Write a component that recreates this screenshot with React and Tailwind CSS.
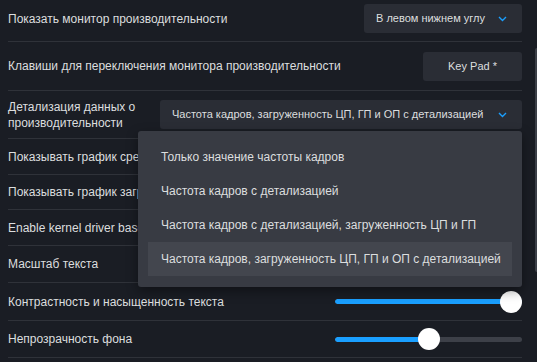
import React from "react";

const font = { fontFamily: '"Liberation Sans", Arial, sans-serif' };

function Chevron() {
  return (
    <svg width="9" height="6" viewBox="0 0 9 6" className="shrink-0">
      <path d="M1 1 L4.5 4.5 L8 1" fill="none" stroke="#1a9fff" strokeWidth="1.4" />
    </svg>
  );
}

function Row({ h, children, className = "" }) {
  return (
    <div className={`flex items-center justify-between border-b border-[#2f3239] ${h} ${className}`}>
      {children}
    </div>
  );
}

function Slider({ pct }) {
  return (
    <div className="relative w-[187px] h-[22px] flex items-center">
      <div className="w-full h-[5px] rounded-full bg-[#3d4048] overflow-hidden">
        <div className="h-full rounded-full bg-[#1a9fff]" style={{ width: `${pct}%` }} />
      </div>
      <div
        className="absolute w-[22px] h-[22px] rounded-full bg-white"
        style={{ left: `calc((100% - 22px) * ${pct / 100})` }}
      />
    </div>
  );
}

export default function App() {
  const items = [
    "Только значение частоты кадров",
    "Частота кадров с детализацией",
    "Частота кадров с детализацией, загруженность ЦП и ГП",
    "Частота кадров, загруженность ЦП, ГП и ОП с детализацией",
  ];
  return (
    <div
      className="relative w-[537px] h-[362px] overflow-hidden bg-[#1a1d24] text-[#dcdedf]"
      style={font}
    >
      <div className="w-[514px] ml-[8px] text-[12px]">
        <Row h="h-[42px]" className="pb-[4px]">
          <span>Показать монитор производительности</span>
          <div className="flex items-center justify-between w-[158px] h-[29px] rounded-[3px] bg-[#2a2d35] pl-[12px] pr-[15px] text-[11px] whitespace-nowrap">
            <span>В левом нижнем углу</span>
            <Chevron />
          </div>
        </Row>
        <Row h="h-[49px]">
          <span>Клавиши для переключения монитора производительности</span>
          <div className="flex items-center justify-center w-[99px] h-[29px] rounded-[3px] bg-[#2a2d35] text-[11px]">
            Key Pad *
          </div>
        </Row>
        <Row h="h-[48px]">
          <span className="leading-[16px]">
            Детализация данных о
            <br />
            производительности
          </span>
          <div className="flex items-center justify-between w-[362px] h-[29px] rounded-[3px] bg-[#2a2d35] pl-[12px] pr-[15px] text-[11px] whitespace-nowrap">
            <span>Частота кадров, загруженность ЦП, ГП и ОП с детализацией</span>
            <Chevron />
          </div>
        </Row>
        <Row h="h-[36px]">
          <span className="w-[130px] overflow-hidden whitespace-nowrap">Показывать график средней частоты кадров</span>
        </Row>
        <Row h="h-[35px]">
          <span className="w-[130px] overflow-hidden whitespace-nowrap">Показывать график загрузки</span>
        </Row>
        <Row h="h-[36px]">
          <span className="w-[130px] overflow-hidden whitespace-nowrap">Enable kernel driver based GPU performance monitoring</span>
        </Row>
        <Row h="h-[37px]">
          <span>Масштаб текста</span>
        </Row>
        <Row h="h-[38px]">
          <span>Контрастность и насыщенность текста</span>
          <Slider pct={100} />
        </Row>
        <Row h="h-[37px]">
          <span>Непрозрачность фона</span>
          <Slider pct={50} />
        </Row>
      </div>

      {/* dropdown menu */}
      <div className="absolute left-[138px] top-[131px] w-[384px] h-[156px] rounded-[3px] bg-[#383b43] pt-[9px] px-[10px] text-[12px] whitespace-nowrap shadow-[0_4px_12px_rgba(0,0,0,0.4)]">
        {items.map((t, i) => (
          <div
            key={i}
            className={`flex items-center h-[34px] pl-[13px] ${i === 3 ? "bg-[#43464e]" : ""}`}
          >
            {t}
          </div>
        ))}
      </div>

      {/* scrollbar */}
      <div className="absolute left-[535px] top-[48px] w-[4px] h-[224px] rounded-[2px] bg-[#3b3f47]" />
    </div>
  );
}
